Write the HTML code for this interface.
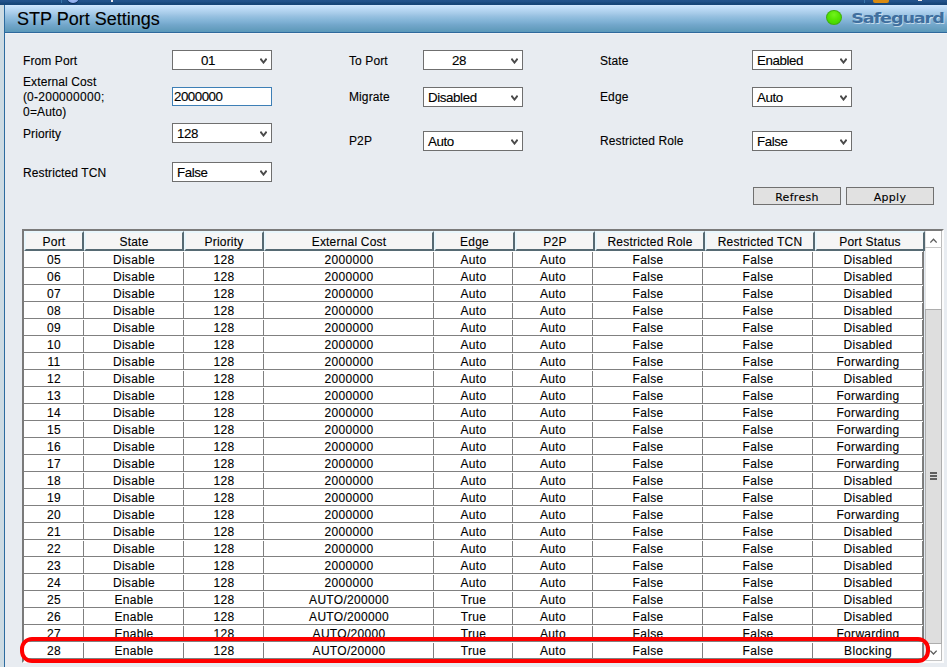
<!DOCTYPE html><html><head><meta charset="utf-8"><title>STP Port Settings</title><style>
html,body{margin:0;padding:0}
html{background:#e8ecf1;overflow:hidden}
body{width:947px;height:667px;position:relative;overflow:hidden;background:#e8ecf1;font-family:"Liberation Sans",sans-serif;font-size:12px;color:#000;-webkit-text-stroke:0.12px #000}
.a{position:absolute}
.lbl{position:absolute;white-space:nowrap;line-height:15px;font-size:12px;letter-spacing:0.1px}
.sel{position:absolute;box-sizing:border-box;width:100px;height:20px;border:1px solid #6f6f6f;background:#fff;font-size:13.33px;line-height:18px;padding-top:0.5px;padding-left:4px;white-space:nowrap;letter-spacing:-0.4px}
.sel svg{position:absolute;right:4px;top:7px}
.btn{position:absolute;box-sizing:border-box;width:88px;height:18px;border:1px solid #707070;background:#e1e1e1;font-family:"DejaVu Sans",sans-serif;font-size:11px;line-height:16px;padding-top:2px;letter-spacing:0.3px;text-align:center;overflow:hidden}
#box{position:absolute;left:22px;top:229px;width:922px;height:434px;box-sizing:border-box;border-top:2px solid #7a7a7a;border-left:2px solid #7a7a7a;border-right:2px solid #fcfcfc;border-bottom:2px solid #fcfcfc;background:#fff;overflow:hidden}
table{border-collapse:separate;border-spacing:0;table-layout:fixed;position:absolute}
#hd{left:0;top:0;width:901px}
#hd th{box-sizing:border-box;height:20px;padding:2px 0 0 0;font-weight:normal;font-size:12px;line-height:14px;background:#f5f5f5;border-top:2px solid #e8f6fc;border-left:2px solid #e8f6fc;border-right:2px solid #566a73;border-bottom:2px solid #566a73;text-align:center;white-space:nowrap;letter-spacing:0.2px}
i{font-style:normal;letter-spacing:0.3px}
#dt{left:0;top:20px;width:900px;border-right:1px solid #7a7a7a}
#dt td{box-sizing:border-box;height:17px;padding:2px 0 0 0;font-size:12px;line-height:13px;text-align:center;white-space:nowrap;letter-spacing:0.3px;border-bottom:1px solid #808080;border-top:1px solid #fff;background:linear-gradient(#808080,#808080) no-repeat right 0 top 0/1px 15px}
</style></head><body>
<div class="a" style="left:0;top:0;width:947px;height:5px;background:linear-gradient(#23548c 0,#20508a 35%,#18487c 60%,#164577 100%)"></div>
<div class="a" style="left:61px;top:0;width:1px;height:3px;background:#3a78ad"></div>
<div class="a" style="left:66.5px;top:-8.6px;width:12px;height:12px;border-radius:50%;background:radial-gradient(circle at 50% 60%,#a8c0f4,#6f94e4);box-shadow:0 1px 1px #0c2a55"></div>
<div class="a" style="left:111px;top:0;width:2px;height:2px;background:#e8e8f0"></div>
<div class="a" style="left:864px;top:0;width:1px;height:3px;background:#3a78ad"></div>
<div class="a" style="left:873px;top:0;width:16px;height:3px;background:#d98a10;border-radius:0 0 2px 2px"></div>
<div class="a" style="left:918px;top:0;width:4px;height:1px;background:#f0e8e8"></div>
<div class="a" style="left:0;top:5px;width:4px;height:662px;background:#cddbe3"></div>
<div class="a" style="left:4px;top:5px;width:1px;height:662px;background:#2d6b9f"></div>
<div class="a" style="left:5px;top:5px;width:942px;height:27px;background:linear-gradient(#d2e8ff 0,#c8e2fc 4%,#b6d6f2 18%,#a8cce9 30%,#98c1e1 41%,#8ab9da 52%,#7eb0d4 63%,#72a6ca 74%,#69a0c2 85%,#619cbd 93%,#5a98bb 100%)"></div>
<div class="a" style="left:5px;top:32px;width:942px;height:1px;background:#2e699d"></div>
<div class="a" style="left:5px;top:33px;width:942px;height:1px;background:#f1f3f6"></div>
<div class="a" style="left:17px;top:9px;font-size:18px;line-height:21px;white-space:nowrap">STP Port Settings</div>
<div class="a" style="left:826px;top:9.6px;width:16px;height:15.6px;box-sizing:border-box;border:1px solid rgba(60,160,20,0.75);border-radius:50%;background:radial-gradient(circle at 50% 28%,#72f21c,#55e402 45%,#4ad800 75%,#40bc00)"></div>
<svg class="a" style="left:845px;top:5px" width="102" height="27"><g transform="translate(6.2,17.8) scale(1.262,1)" font-family="DejaVu Sans, sans-serif" font-weight="bold" font-size="14" letter-spacing="-0.9"><text x="0.7" y="0.9" fill="#ffffff" opacity="0.55">Safeguard</text><text x="0" y="0" fill="#3f6f9f">Safeguard</text></g></svg>
<div class="lbl" style="left:23px;top:54px">From Port</div>
<div class="lbl" style="left:23px;top:75px">External Cost<br>(<i>0</i>-<i>200000000</i>;<br><i>0</i>=Auto)</div>
<div class="lbl" style="left:23px;top:127px">Priority</div>
<div class="lbl" style="left:23px;top:166px">Restricted TCN</div>
<div class="lbl" style="left:349px;top:54px">To Port</div>
<div class="lbl" style="left:349px;top:90px">Migrate</div>
<div class="lbl" style="left:349px;top:134px">P2P</div>
<div class="lbl" style="left:600px;top:54px">State</div>
<div class="lbl" style="left:600px;top:90px">Edge</div>
<div class="lbl" style="left:600px;top:134px">Restricted Role</div>
<div class="sel" style="left:172px;top:50px;padding-left:0"><span style="position:absolute;left:0;width:70px;text-align:center">01</span><svg width="7" height="6" viewBox="0 0 7 6"><path d="M0.4 0.7 L3.5 4.6 L6.6 0.7" fill="none" stroke="#4a4a4a" stroke-width="1.9"/></svg></div>
<div class="sel" style="left:172px;top:87px;height:19px;border-color:#3d7fb6;padding-top:0;padding-left:1px;line-height:17px;letter-spacing:-0.5px">2000000</div>
<div class="sel" style="left:172px;top:123px;">128<svg width="7" height="6" viewBox="0 0 7 6"><path d="M0.4 0.7 L3.5 4.6 L6.6 0.7" fill="none" stroke="#4a4a4a" stroke-width="1.9"/></svg></div>
<div class="sel" style="left:172px;top:162px;">False<svg width="7" height="6" viewBox="0 0 7 6"><path d="M0.4 0.7 L3.5 4.6 L6.6 0.7" fill="none" stroke="#4a4a4a" stroke-width="1.9"/></svg></div>
<div class="sel" style="left:423px;top:50px;padding-left:0"><span style="position:absolute;left:0;width:70px;text-align:center">28</span><svg width="7" height="6" viewBox="0 0 7 6"><path d="M0.4 0.7 L3.5 4.6 L6.6 0.7" fill="none" stroke="#4a4a4a" stroke-width="1.9"/></svg></div>
<div class="sel" style="left:423px;top:87px;">Disabled<svg width="7" height="6" viewBox="0 0 7 6"><path d="M0.4 0.7 L3.5 4.6 L6.6 0.7" fill="none" stroke="#4a4a4a" stroke-width="1.9"/></svg></div>
<div class="sel" style="left:423px;top:131px;">Auto<svg width="7" height="6" viewBox="0 0 7 6"><path d="M0.4 0.7 L3.5 4.6 L6.6 0.7" fill="none" stroke="#4a4a4a" stroke-width="1.9"/></svg></div>
<div class="sel" style="left:752px;top:50px;">Enabled<svg width="7" height="6" viewBox="0 0 7 6"><path d="M0.4 0.7 L3.5 4.6 L6.6 0.7" fill="none" stroke="#4a4a4a" stroke-width="1.9"/></svg></div>
<div class="sel" style="left:752px;top:87px;">Auto<svg width="7" height="6" viewBox="0 0 7 6"><path d="M0.4 0.7 L3.5 4.6 L6.6 0.7" fill="none" stroke="#4a4a4a" stroke-width="1.9"/></svg></div>
<div class="sel" style="left:752px;top:131px;">False<svg width="7" height="6" viewBox="0 0 7 6"><path d="M0.4 0.7 L3.5 4.6 L6.6 0.7" fill="none" stroke="#4a4a4a" stroke-width="1.9"/></svg></div>
<div class="btn" style="left:753px;top:187px">Refresh</div>
<div class="btn" style="left:846px;top:187px">Apply</div>
<div id="box">
<table id="hd"><tr><th style="width:60px">Port</th><th style="width:100px">State</th><th style="width:80px">Priority</th><th style="width:170px">External Cost</th><th style="width:81px">Edge</th><th style="width:80px">P2P</th><th style="width:110px">Restricted Role</th><th style="width:110px">Restricted TCN</th><th style="width:110px">Port Status</th></tr></table>
<table id="dt">
<colgroup><col style="width:60px"><col style="width:100px"><col style="width:80px"><col style="width:170px"><col style="width:79px"><col style="width:80px"><col style="width:110px"><col style="width:110px"><col style="width:110px"></colgroup>
<tr><td><i>05</i></td><td>Disable</td><td><i>128</i></td><td><i>2000000</i></td><td>Auto</td><td>Auto</td><td>False</td><td>False</td><td>Disabled</td></tr>
<tr><td><i>06</i></td><td>Disable</td><td><i>128</i></td><td><i>2000000</i></td><td>Auto</td><td>Auto</td><td>False</td><td>False</td><td>Disabled</td></tr>
<tr><td><i>07</i></td><td>Disable</td><td><i>128</i></td><td><i>2000000</i></td><td>Auto</td><td>Auto</td><td>False</td><td>False</td><td>Disabled</td></tr>
<tr><td><i>08</i></td><td>Disable</td><td><i>128</i></td><td><i>2000000</i></td><td>Auto</td><td>Auto</td><td>False</td><td>False</td><td>Disabled</td></tr>
<tr><td><i>09</i></td><td>Disable</td><td><i>128</i></td><td><i>2000000</i></td><td>Auto</td><td>Auto</td><td>False</td><td>False</td><td>Disabled</td></tr>
<tr><td><i>10</i></td><td>Disable</td><td><i>128</i></td><td><i>2000000</i></td><td>Auto</td><td>Auto</td><td>False</td><td>False</td><td>Disabled</td></tr>
<tr><td><i>11</i></td><td>Disable</td><td><i>128</i></td><td><i>2000000</i></td><td>Auto</td><td>Auto</td><td>False</td><td>False</td><td>Forwarding</td></tr>
<tr><td><i>12</i></td><td>Disable</td><td><i>128</i></td><td><i>2000000</i></td><td>Auto</td><td>Auto</td><td>False</td><td>False</td><td>Disabled</td></tr>
<tr><td><i>13</i></td><td>Disable</td><td><i>128</i></td><td><i>2000000</i></td><td>Auto</td><td>Auto</td><td>False</td><td>False</td><td>Forwarding</td></tr>
<tr><td><i>14</i></td><td>Disable</td><td><i>128</i></td><td><i>2000000</i></td><td>Auto</td><td>Auto</td><td>False</td><td>False</td><td>Forwarding</td></tr>
<tr><td><i>15</i></td><td>Disable</td><td><i>128</i></td><td><i>2000000</i></td><td>Auto</td><td>Auto</td><td>False</td><td>False</td><td>Forwarding</td></tr>
<tr><td><i>16</i></td><td>Disable</td><td><i>128</i></td><td><i>2000000</i></td><td>Auto</td><td>Auto</td><td>False</td><td>False</td><td>Forwarding</td></tr>
<tr><td><i>17</i></td><td>Disable</td><td><i>128</i></td><td><i>2000000</i></td><td>Auto</td><td>Auto</td><td>False</td><td>False</td><td>Forwarding</td></tr>
<tr><td><i>18</i></td><td>Disable</td><td><i>128</i></td><td><i>2000000</i></td><td>Auto</td><td>Auto</td><td>False</td><td>False</td><td>Disabled</td></tr>
<tr><td><i>19</i></td><td>Disable</td><td><i>128</i></td><td><i>2000000</i></td><td>Auto</td><td>Auto</td><td>False</td><td>False</td><td>Disabled</td></tr>
<tr><td><i>20</i></td><td>Disable</td><td><i>128</i></td><td><i>2000000</i></td><td>Auto</td><td>Auto</td><td>False</td><td>False</td><td>Forwarding</td></tr>
<tr><td><i>21</i></td><td>Disable</td><td><i>128</i></td><td><i>2000000</i></td><td>Auto</td><td>Auto</td><td>False</td><td>False</td><td>Disabled</td></tr>
<tr><td><i>22</i></td><td>Disable</td><td><i>128</i></td><td><i>2000000</i></td><td>Auto</td><td>Auto</td><td>False</td><td>False</td><td>Disabled</td></tr>
<tr><td><i>23</i></td><td>Disable</td><td><i>128</i></td><td><i>2000000</i></td><td>Auto</td><td>Auto</td><td>False</td><td>False</td><td>Disabled</td></tr>
<tr><td><i>24</i></td><td>Disable</td><td><i>128</i></td><td><i>2000000</i></td><td>Auto</td><td>Auto</td><td>False</td><td>False</td><td>Disabled</td></tr>
<tr><td><i>25</i></td><td>Enable</td><td><i>128</i></td><td>AUTO/<i>200000</i></td><td>True</td><td>Auto</td><td>False</td><td>False</td><td>Disabled</td></tr>
<tr><td><i>26</i></td><td>Enable</td><td><i>128</i></td><td>AUTO/<i>200000</i></td><td>True</td><td>Auto</td><td>False</td><td>False</td><td>Disabled</td></tr>
<tr><td><i>27</i></td><td>Enable</td><td><i>128</i></td><td>AUTO/<i>20000</i></td><td>True</td><td>Auto</td><td>False</td><td>False</td><td>Forwarding</td></tr>
<tr><td><i>28</i></td><td>Enable</td><td><i>128</i></td><td>AUTO/<i>20000</i></td><td>True</td><td>Auto</td><td>False</td><td>False</td><td>Blocking</td></tr>
</table>
<div class="a" style="left:900px;top:20px;width:1px;height:410px;background:#e2eaf2"></div>
<div class="a" style="left:901px;top:0;width:17px;height:430px;background:#fff;box-sizing:border-box;border-left:1px solid #e4e4e4;border-right:1px solid #bcbcbc;border-bottom:1px solid #c4c4c4"></div>
<div class="a" style="left:901px;top:16px;width:17px;height:1px;background:#c8c8c8"></div>
<svg class="a" style="left:906px;top:6px" width="7" height="7" viewBox="0 0 7 7"><path d="M0.3 5.5 L3.5 2.2 L6.7 5.5" fill="none" stroke="#5c5c5c" stroke-width="1.3"/></svg>
<div class="a" style="left:901px;top:78px;width:17px;height:335px;box-sizing:border-box;background:#dedede;border:1px solid #adadad"></div>
<div class="a" style="left:906px;top:241px;width:7px;height:2px;background:#606060;box-shadow:0 3px 0 #606060,0 6px 0 #606060"></div>
<svg class="a" style="left:906px;top:418px" width="7" height="7" viewBox="0 0 7 7"><path d="M0.3 1.7 L3.5 5.0 L6.7 1.7" fill="none" stroke="#5c5c5c" stroke-width="1.3"/></svg>
</div>
<div class="a" style="left:20px;top:637px;width:910px;height:26px;box-sizing:border-box;border:4px solid #ff0000;border-radius:12px"></div>
</body></html>
